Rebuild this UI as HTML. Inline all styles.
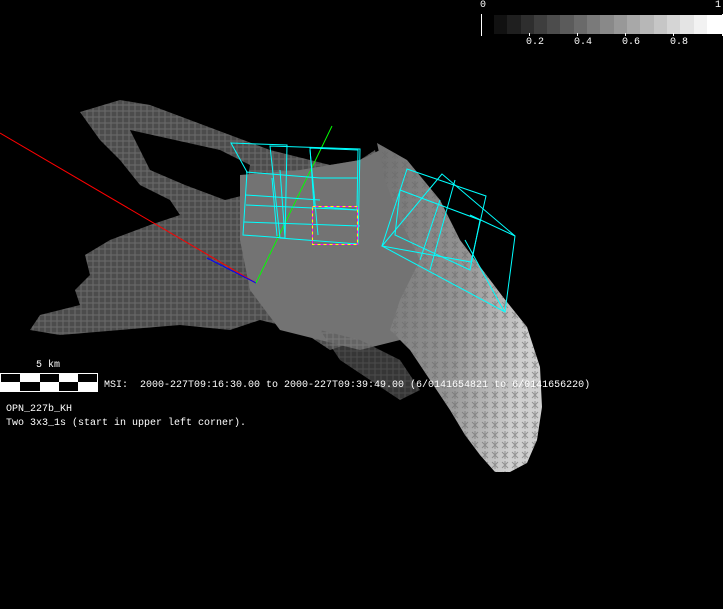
<!DOCTYPE html>
<html><head><meta charset="utf-8"><style>
html,body{margin:0;padding:0;background:#000;}
body{width:723px;height:609px;position:relative;overflow:hidden;font-family:"Liberation Mono","DejaVu Sans Mono",monospace;color:#fff;}
.t{position:absolute;font-size:10px;white-space:pre;line-height:12px;}
</style></head><body>
<svg width="723" height="609" style="position:absolute;left:0;top:0">
<defs>
<linearGradient id="gb" x1="0" y1="0" x2="1" y2="0.3">
<stop offset="0" stop-color="#707070"/><stop offset="0.6" stop-color="#959595"/><stop offset="1" stop-color="#d0d0d0"/>
</linearGradient>
<pattern id="mesh" width="6" height="6" patternUnits="userSpaceOnUse">
<rect width="6" height="6" fill="#5a5a5a"/><path d="M0 3h6M3 0v6" stroke="#7e7e7e" stroke-width="1"/>
</pattern>
<pattern id="mesh2" width="10" height="10" patternUnits="userSpaceOnUse">
<path d="M2 2l6 6M8 2l-6 6M5 1v8" stroke="#6a6a6a" stroke-width="1"/>
</pattern>
</defs>
<path d="M80,112 L120,100 L150,105 L190,120 L230,135 L270,150 L330,165 L360,160 L375,150 L385,200 L380,260 L380,320 L360,340 L330,350 L300,330 L260,320 L230,330 L180,325 L120,330 L60,335 L30,330 L40,315 L80,305 L75,290 L90,275 L85,255 L110,240 L150,225 L180,215 L170,200 L140,185 L120,160 L100,140 Z" fill="url(#mesh)" opacity="0.85"/>
<path d="M130,130 L175,140 L220,150 L250,165 L245,195 L225,200 L185,185 L150,170 Z" fill="#000"/>
<path d="M240,175 L300,170 L360,160 L380,150 L400,170 L420,230 L440,290 L430,330 L400,340 L360,350 L320,340 L280,330 L250,290 L240,240 Z" fill="#737373"/>
<path d="M377,143 L407,160 L440,200 L460,240 L503,297 L527,327 L540,367 L542,407 L537,440 L527,463 L510,472 L495,472 L480,455 L465,435 L450,410 L430,380 L410,350 L390,330 L400,300 L420,260 L400,220 L385,180 Z" fill="url(#gb)"/>
<path d="M377,143 L407,160 L440,200 L460,240 L503,297 L527,327 L540,367 L542,407 L537,440 L527,463 L510,472 L495,472 L480,455 L465,435 L450,410 L430,380 L410,350 L390,330 L400,300 L420,260 L400,220 L385,180 Z" fill="url(#mesh2)" opacity="0.6"/>
<path d="M320,330 L360,340 L400,360 L420,390 L400,400 L370,380 L340,360 Z" fill="url(#mesh)" opacity="0.6"/>
<line x1="0" y1="133" x2="256" y2="283" stroke="#f00" stroke-width="1"/>
<line x1="207" y1="258" x2="256" y2="283" stroke="#00f" stroke-width="1"/>
<line x1="332" y1="126" x2="256" y2="283" stroke="#0f0" stroke-width="1"/>
<g fill="none" stroke="#0ff" stroke-width="1">
<path d="M231,143 L287,145 L285,238 L243,235 L247,172 Z"/>
<path d="M270,146 L360,149 L358,244 L280,238 Z"/>
<path d="M310,148 L358,150 L357,210 L314,206 Z"/>
<path d="M246,172 L320,178 L358,178 M246,195 L320,200 M246,205 L358,210 M244,222 L360,226"/>
<path d="M280,170 L285,238 M310,150 L318,235 M272,178 L277,236"/>
<path d="M407,169 L486,196 L471,262 L382,246 Z"/>
<path d="M442,174 L515,236 L505,312 L382,246 Z"/>
<path d="M400,190 L480,220 L470,270 L395,235 Z"/>
<path d="M470,215 L515,236 M440,200 L420,260 M455,180 L430,270 M465,240 L504,311"/>
</g>
<rect x="312.5" y="206.5" width="45" height="38" fill="none" stroke="#ff0" stroke-dasharray="3,3"/>
<rect x="312.5" y="206.5" width="45" height="38" fill="none" stroke="#f0f" stroke-dasharray="3,3" stroke-dashoffset="3"/>
<line x1="481.5" y1="14" x2="481.5" y2="36" stroke="#fff"/>
<line x1="722.5" y1="14" x2="722.5" y2="36" stroke="#fff"/>
<g>
<rect x="494" y="15" width="14" height="19" fill="#111"/>
<rect x="507" y="15" width="14" height="19" fill="#1f1f1f"/>
<rect x="521" y="15" width="14" height="19" fill="#2e2e2e"/>
<rect x="534" y="15" width="14" height="19" fill="#3e3e3e"/>
<rect x="547" y="15" width="14" height="19" fill="#4c4c4c"/>
<rect x="560" y="15" width="14" height="19" fill="#5b5b5b"/>
<rect x="574" y="15" width="14" height="19" fill="#6a6a6a"/>
<rect x="587" y="15" width="14" height="19" fill="#7a7a7a"/>
<rect x="600" y="15" width="14" height="19" fill="#898989"/>
<rect x="614" y="15" width="14" height="19" fill="#989898"/>
<rect x="627" y="15" width="14" height="19" fill="#a8a8a8"/>
<rect x="640" y="15" width="14" height="19" fill="#b7b7b7"/>
<rect x="654" y="15" width="14" height="19" fill="#c6c6c6"/>
<rect x="667" y="15" width="14" height="19" fill="#d5d5d5"/>
<rect x="680" y="15" width="14" height="19" fill="#e4e4e4"/>
<rect x="694" y="15" width="14" height="19" fill="#f2f2f2"/>
<rect x="707" y="15" width="15" height="19" fill="#fff"/>
</g>
<g stroke="#fff"><line x1="529.5" y1="33" x2="529.5" y2="36"/><line x1="577.5" y1="33" x2="577.5" y2="36"/><line x1="625.5" y1="33" x2="625.5" y2="36"/><line x1="673.5" y1="33" x2="673.5" y2="36"/></g>
<rect x="0.5" y="373.5" width="97" height="18" fill="#fff" stroke="#fff"/>
<g fill="#000"><rect x="1" y="374" width="19" height="8"/><rect x="40" y="374" width="19" height="8"/><rect x="78" y="374" width="19" height="8"/><rect x="20" y="382" width="20" height="9"/><rect x="59" y="382" width="19" height="9"/></g>
</svg>
<div class="t" style="left:480px;top:0px">0</div>
<div class="t" style="left:715px;top:0px">1</div>
<div class="t" style="left:526px;top:37px">0.2</div>
<div class="t" style="left:574px;top:37px">0.4</div>
<div class="t" style="left:622px;top:37px">0.6</div>
<div class="t" style="left:670px;top:37px">0.8</div>
<div class="t" style="left:36px;top:360px">5 km</div>
<div class="t" style="left:104px;top:380px">MSI:  2000-227T09:16:30.00 to 2000-227T09:39:49.00 (6/0141654821 to 6/0141656220)</div>
<div class="t" style="left:6px;top:404px">OPN_227b_KH</div>
<div class="t" style="left:6px;top:418px">Two 3x3_1s (start in upper left corner).</div>
</body></html>
